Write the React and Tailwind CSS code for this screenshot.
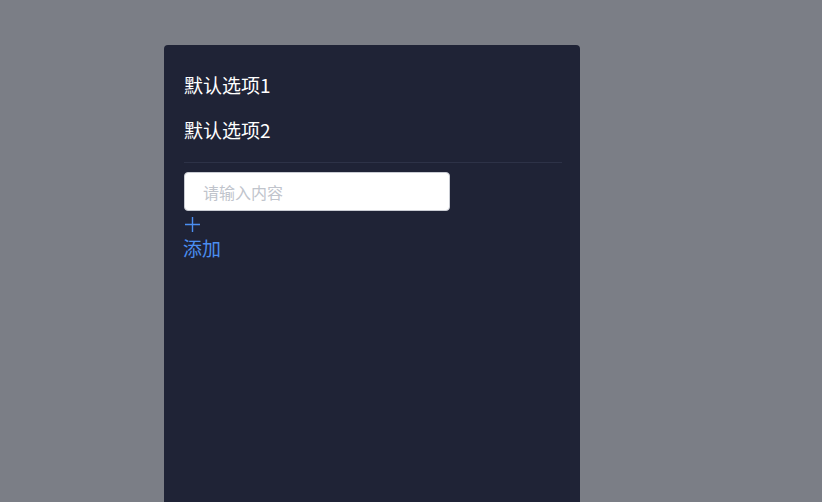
import React from 'react';

const font = { fontFamily: '"Noto Sans CJK SC", "Liberation Sans", sans-serif' };

export default function App() {
  const options = ['默认选项1', '默认选项2'];

  return (
    <div className="w-[822px] h-[502px] bg-[#7b7e86] overflow-hidden" style={font}>
      <div className="ml-[164px] mt-[45px] w-[416px] h-[457px] bg-[#1f2336] rounded-t-[4px] pl-[20px] pr-[18px] pt-[18px]">
        {options.map((opt) => (
          <div key={opt} className="h-[45px] flex items-center text-[19px] text-white">
            {opt}
          </div>
        ))}
        <div className="mt-[9px] h-px bg-[#2d3247]" />
        <div className="mt-[9px] w-[266px] h-[39px] bg-white rounded-[4px] border border-[#c9ccd3] flex items-center pl-[18px]">
          <input
            className="w-full outline-none text-[16px] text-gray-700 placeholder:text-[#c0c4cc] bg-transparent"
            placeholder="请输入内容"
            style={font}
          />
        </div>
        <div className="flex flex-col items-start text-[#4b8ef0] mt-[5px]">
          <svg width="17" height="17" viewBox="0 0 17 17">
            <path d="M8.5 1v15M1 8.5h15" stroke="currentColor" strokeWidth="1.4" fill="none" />
          </svg>
          <span className="text-[19px] leading-[30px] -ml-[1px]">添加</span>
        </div>
      </div>
    </div>
  );
}
